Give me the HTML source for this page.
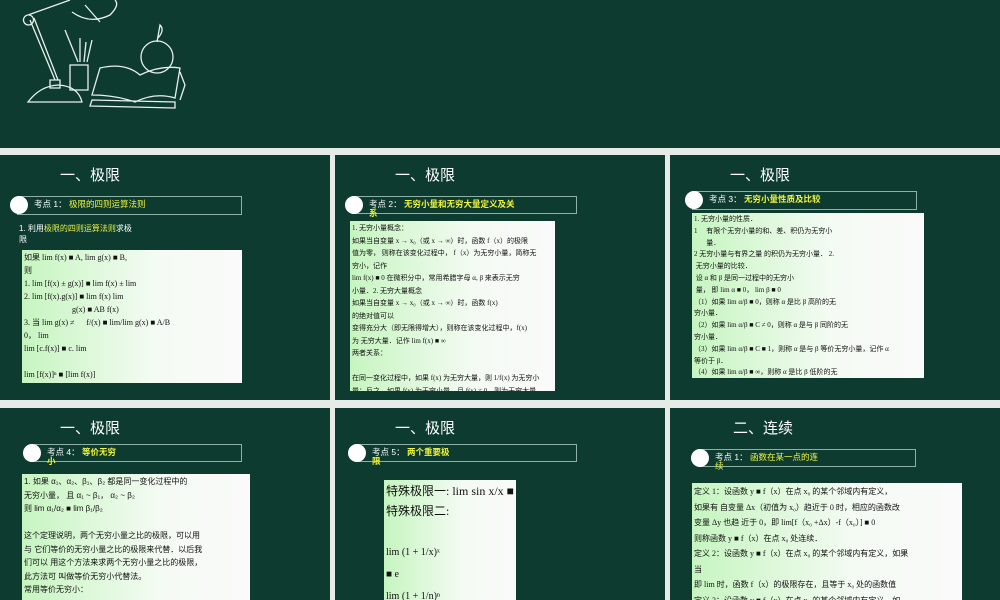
<!DOCTYPE html>
<html><head><meta charset="utf-8"><style>
*{margin:0;padding:0;box-sizing:border-box}
body{width:1000px;height:600px;background:#e6ebe8;position:relative;overflow:hidden;font-family:"Liberation Sans","Noto Sans CJK SC",sans-serif}
.s{position:absolute;background:#0d3b2f;overflow:hidden;width:330px}
.t{position:absolute;color:#fff;font-size:15px;top:9px;left:60px}
.h{position:absolute;border:1px solid #8fb0a4;height:19px;color:#fff;font-size:8.5px;padding:3px 0 0 16px;line-height:9px}
.h b{color:#f0f43c}
.c{position:absolute;left:-8px;top:-1px;width:18px;height:18px;border-radius:50%;background:#fff}
.b{position:absolute;background:linear-gradient(90deg,#c6f5c0,#f4fbf3 60%,#fafafa);color:#111;font-size:7.5px;line-height:12px;padding:1px 2px;overflow:hidden;font-family:"Liberation Serif","Noto Sans CJK SC",serif}
.w{color:#fff;font-size:8px;position:absolute}
.y{color:#e6f04a}
</style></head><body>
<div class="s" style="left:0;top:0;width:1000px;height:148px">
<svg width="200" height="150" viewBox="0 0 200 150" fill="none" stroke="#e8f0ec" stroke-width="1.3">
<path d="M28 15 L70 0 M28 15 a5 5 0 1 0 1 0 M30 20 L55 80 M34 18 L58 80 M50 80 h10 v8 h-10z M28 102 Q40 86 58 85 Q78 86 82 102 Z"/>
<path d="M72 12 Q90 25 110 15 Q120 5 115 0 M85 5 L100 22"/>
<path d="M70 65 h18 v25 h-18z M65 30 L78 62 M80 38 L80 62 M86 42 L84 62 M92 40 L87 62"/>
<path d="M100 68 Q125 62 140 75 Q160 65 180 68 L175 98 Q155 92 135 102 Q115 95 92 95 Z M92 100 L175 102 L175 108 L90 106Z M180 72 L185 85 L180 100"/>
<circle cx="157" cy="57" r="16"/><path d="M157 42 L160 25 Q165 30 158 38"/>
</svg>
</div>

<!-- slide 1 -->
<div class="s" style="left:0;top:155px;height:245px">
<div class="t">一、极限</div>
<div class="h" style="left:17px;top:41px;width:225px"><div class="c"></div>考点 1： <b style="font-weight:normal">极限的四则运算法则</b></div>
<div class="w" style="left:19px;top:68px;line-height:11px">1. 利用<span class="y">极限的四则运算法则</span>求极<br>限</div>
<div class="b" style="left:22px;top:95px;width:220px;height:133px;font-size:8px;line-height:13px">如果 lim f(x) ■ A, lim g(x) ■ B,<br>则<br>1. lim [f(x) ± g(x)] ■ lim f(x) ± lim<br>2. lim [f(x).g(x)] ■ lim f(x) lim<br>&nbsp;&nbsp;&nbsp;&nbsp;&nbsp;&nbsp;&nbsp;&nbsp;&nbsp;&nbsp;&nbsp;&nbsp;&nbsp;&nbsp;&nbsp;&nbsp;&nbsp;&nbsp;&nbsp;&nbsp;&nbsp;&nbsp;&nbsp;&nbsp;g(x) ■ AB f(x)<br>3. 当 lim g(x) ≠ &nbsp;&nbsp;&nbsp;&nbsp;&nbsp;f/(x) ■ lim/lim g(x) ■ A/B<br>0， lim<br>lim [c.f(x)] ■ c. lim<br><br>lim [f(x)]ⁿ ■ [lim f(x)]</div>
</div>

<!-- slide 2 -->
<div class="s" style="left:335px;top:155px;height:245px">
<div class="t">一、极限</div>
<div class="h" style="left:17px;top:41px;width:225px;height:18px"><div class="c"></div>考点 2： <b>无穷小量和无穷大量定义及关<br>系</b></div>
<div class="b" style="left:15px;top:66px;width:205px;height:170px;font-size:7px;line-height:12.5px">1. 无穷小量概念：<br>如果当自变量 x → x₀（或 x → ∞）时，函数 f（x）的极限<br>值为零， 则称在该变化过程中， f（x）为无穷小量，简称无<br>穷小，记作<br>lim f(x) ■ 0 在微积分中，常用希腊字母 α, β 来表示无穷<br>小量．2. 无穷大量概念<br>如果当自变量 x → x₀（或 x → ∞）时，函数 f(x)<br>的绝对值可以<br>变得充分大（即无限得增大），则称在该变化过程中，f(x)<br>为 无穷大量．记作 lim f(x) ■ ∞<br>两者关系：<br><br>在同一变化过程中，如果 f(x) 为无穷大量，则 1/f(x) 为无穷小<br>量；反之，如果 f(x) 为无穷小量，且 f(x) ≠ 0，则为无穷大量</div>
</div>

<!-- slide 3 -->
<div class="s" style="left:670px;top:155px;height:245px">
<div class="t">一、极限</div>
<div class="h" style="left:22px;top:36px;width:225px"><div class="c"></div>考点 3： <b>无穷小量性质及比较</b></div>
<div class="b" style="left:22px;top:58px;width:232px;height:165px;font-size:7px;line-height:11.8px">1. 无穷小量的性质．<br>1&nbsp;&nbsp;&nbsp;&nbsp;&nbsp;有限个无穷小量的和、差、积仍为无穷小<br>&nbsp;&nbsp;&nbsp;&nbsp;&nbsp;&nbsp;&nbsp;量．<br>2 无穷小量与有界之量 的积仍为无穷小量． 2.<br>&nbsp;无穷小量的比较．<br>&nbsp;设 α 和 β 是同一过程中的无穷小<br>&nbsp;量， 即 lim α ■ 0， lim β ■ 0<br>（1）如果 lim α/β ■ 0，则称 α 是比 β 高阶的无<br>穷小量．<br>（2）如果 lim α/β ■ C ≠ 0，则称 α 是与 β 同阶的无<br>穷小量．<br>（3）如果 lim α/β ■ C ■ 1，则称 α 是与 β 等价无穷小量，记作 α<br>等价于 β．<br>（4）如果 lim α/β ■ ∞，则称 α 是比 β 低阶的无<br>穷小量．</div>
</div>

<!-- slide 4 -->
<div class="s" style="left:0;top:408px;height:192px">
<div class="t">一、极限</div>
<div class="h" style="left:30px;top:36px;width:212px;height:18px"><div class="c"></div>考点 4： <b>等价无穷<br>小</b></div>
<div class="b" style="left:22px;top:66px;width:228px;height:130px;font-size:8px;line-height:13.5px;font-family:'Liberation Sans','Noto Sans CJK SC',sans-serif">1. 如果 α₁、α₂、β₁、β₂ 都是同一变化过程中的<br>无穷小量， 且 α₁ ~ β₁， α₂ ~ β₂<br>则 lim α₁/α₂ ■ lim β₁/β₂<br><br>这个定理说明，两个无穷小量之比的极限，可以用<br>与 它们等价的无穷小量之比的极限来代替．以后我<br>们可以 用这个方法来求两个无穷小量之比的极限，<br>此方法可 叫做等价无穷小代替法。<br>常用等价无穷小：</div>
</div>

<!-- slide 5 -->
<div class="s" style="left:335px;top:408px;height:192px">
<div class="t">一、极限</div>
<div class="h" style="left:20px;top:36px;width:222px;height:18px"><div class="c"></div>考点 5： <b>两个重要极<br>限</b></div>
<div class="b" style="left:49px;top:72px;width:132px;height:130px;font-size:12px;line-height:20px">特殊极限一: lim sin x/x ■<br>特殊极限二:<br><br><span style="font-size:10px">lim (1 + 1/x)ˣ<br>■ e<br>lim (1 + 1/n)ⁿ</span></div>
</div>

<!-- slide 6 -->
<div class="s" style="left:670px;top:408px;height:192px">
<div class="t" style="left:63px">二、连续</div>
<div class="h" style="left:28px;top:41px;width:218px;height:18px"><div class="c"></div>考点 1： <b style="font-weight:normal">函数在某一点的连<br>续</b></div>
<div class="b" style="left:22px;top:75px;width:270px;height:120px;font-size:8px;line-height:15.5px">定义 1：设函数 y ■ f（x）在点 x₀ 的某个邻域内有定义，<br>如果有 自变量 Δx（初值为 x₀）趋近于 0 时，相应的函数改<br>变量 Δy 也趋 近于 0，即 lim[f（x₀ +Δx）-f（x₀）] ■ 0<br>则称函数 y ■ f（x）在点 x₀ 处连续．<br>定义 2：设函数 y ■ f（x）在点 x₀ 的某个邻域内有定义，如果<br>当<br>即 lim 时，函数 f（x）的极限存在，且等于 x₀ 处的函数值<br>定义 3：设函数 y ■ f（x）在点 x₀ 的某个邻域内有定义，如</div>
</div>
</body></html>
